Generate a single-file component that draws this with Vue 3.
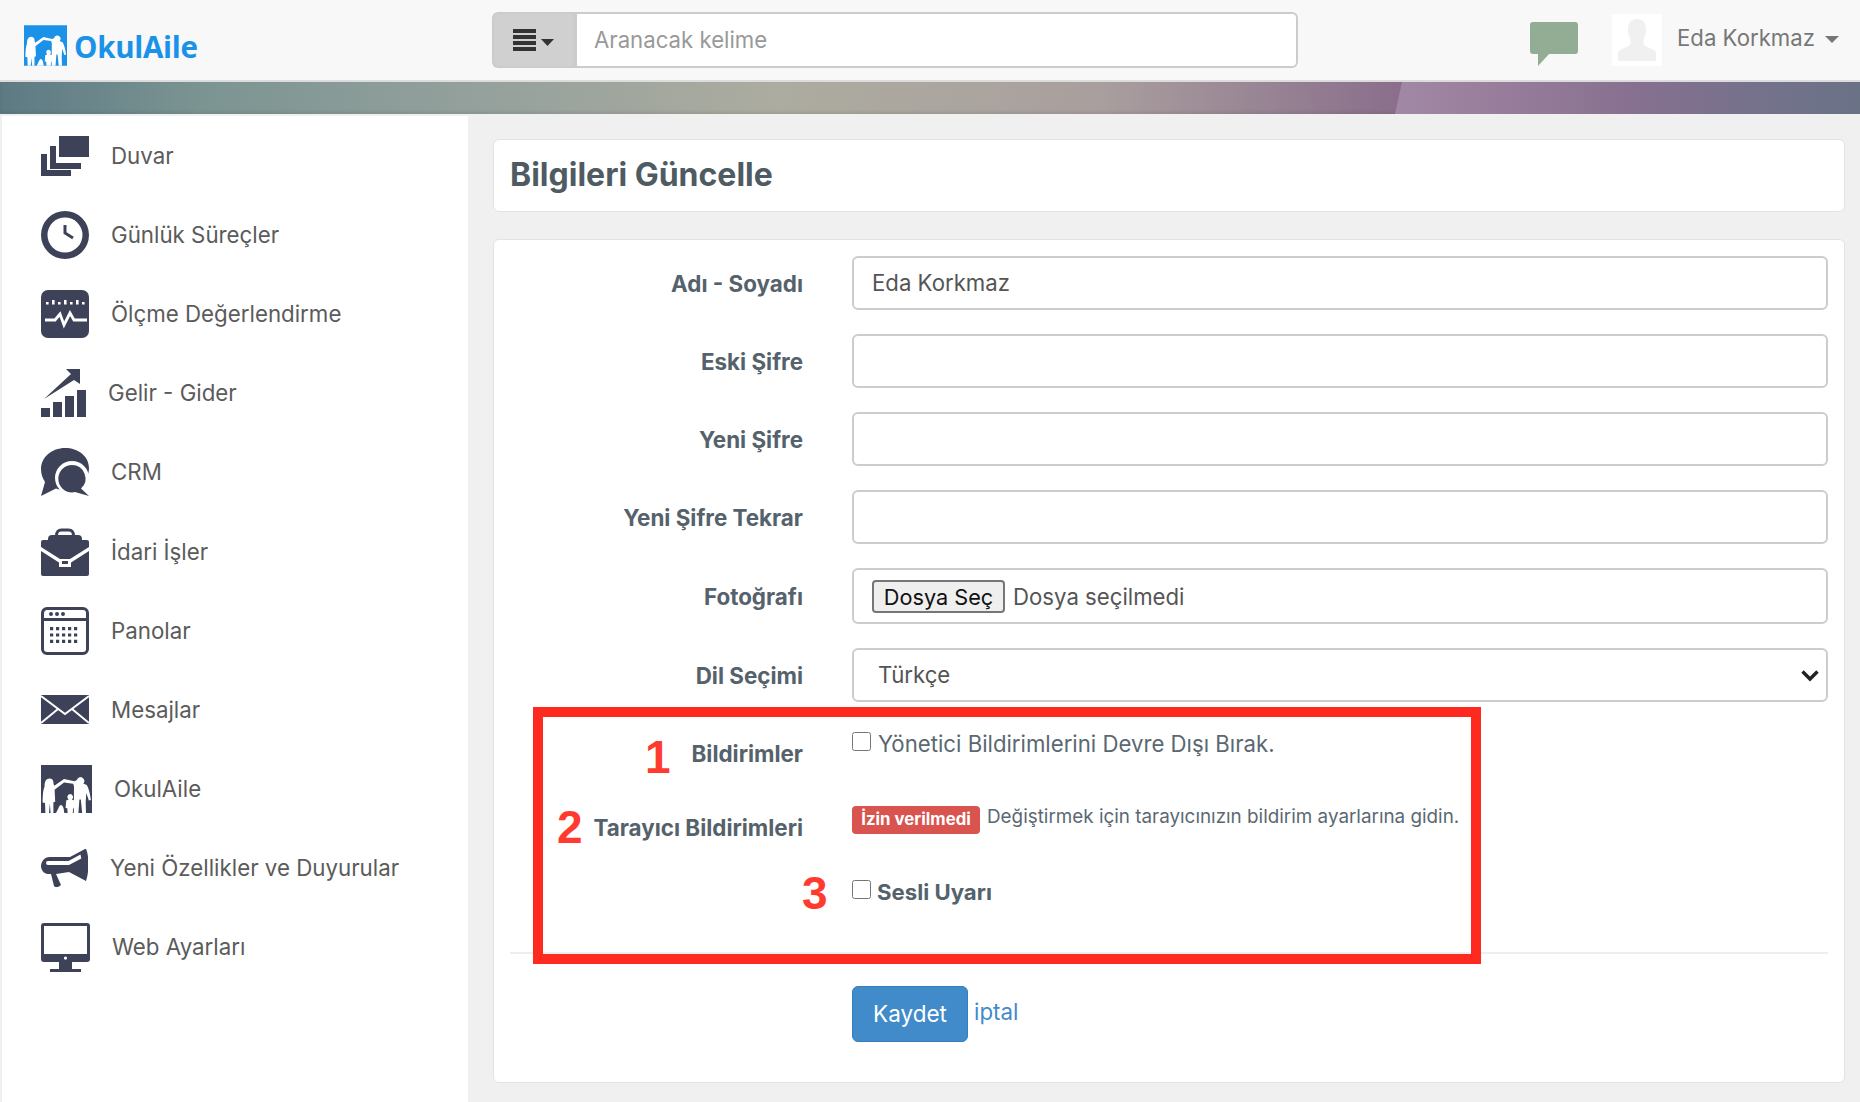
<script setup>
const dark = '#3d4259'
const family = 'M8.500 13.500a4 4.6 0 0 1 4 4.400c0 1 .2 2 .8 2.800L23 14l10.500 2.200 2.400-1.200a3.800 3.800 0 1 1 6.400 3.600l3.400 1.400c2 3 3.600 9.600 4.200 15l-2 .4-2.600-7.400-.6 9.400L45 48h-3.800l-1.400-13.400h-1.400L37.400 48h-4.600l.2-26.400-.8-2.800L23 17.600l-9.400 7.200.6 12-1.800.4L12.400 48H9.600l-.8-9.600L8 48H4.400l-.4-10-2.400-.6C1.800 31 2 25 3.600 21.600 3.400 17 5 13.500 8.500 13.500ZM29 29a3 3 0 0 1 1.800 5.400l2.400 1.200.6 7.400-1.700.2-.3 4.800h-5.200l-.3-4.800-1.700-.2.6-7.400 2.400-1.200A3 3 0 0 1 29 29ZM15 48l2.500-5c.8-1.800 1.500-3 2.500-3s1.700 1.200 2.500 3l.8 5Z'
const gridCells = []
for (let r = 0; r < 3; r++) for (let c = 0; c < 5; c++) gridCells.push(`M${9 + c * 6} ${20 + r * 6.4}h3.200v3.200h-3.200z`)
const dots = [5, 11, 17, 23, 29, 35, 41].map((x, i) => `M${x} ${i % 2 ? 10 : 12}h2.600v${i % 2 ? 4.600 : 2.600}h-2.600z`).join('')

const items = [
  { label: 'Duvar', w: 48, h: 40, paths: [{ d: 'M18 0h30v21H18zM9 10h6v17h25v6H9zM0 18h6v16h24v6H0z' }] },
  { label: 'Günlük Süreçler', w: 48, h: 48, paths: [{ d: 'M24 0a24 24 0 1 1 0 48 24 24 0 0 1 0-48Zm0 6.500a17.500 17.500 0 1 0 0 35 17.500 17.500 0 0 0 0-35Z' }, { d: 'M24 14v8l8 5', f: 'none', s: dark, w: 3 }] },
  { label: 'Ölçme Değerlendirme', w: 48, h: 48, paths: [{ d: 'M7 0h34a7 7 0 0 1 7 7v34a7 7 0 0 1-7 7H7a7 7 0 0 1-7-7V7a7 7 0 0 1 7-7Z' }, { d: dots, f: '#fff' }, { d: 'M4 30h10l5-6 4 11 6-12 4 7h13', f: 'none', s: '#fff', w: 2.800 }] },
  { label: 'Gelir - Gider', w: 45, h: 48, paths: [{ d: 'M0 39h9v9H0zM12 33h9v15h-9zM24 27h9v21h-9zM36 21h9v27h-9zM39 0H25l5 5L3 30l30-19 6 4Z' }] },
  { label: 'CRM', w: 48, h: 48, paths: [{ d: 'M24 0c13 0 24 8 24 20 0 12-11 22-24 22-3 0-6-.4-9-1.400L0 48l4-14C1.500 30 0 26 0 21 0 9 11 0 24 0Z' }, { d: 'M31 13a17 17 0 1 1 0 34 17 17 0 0 1 0-34Z', f: '#fff' }, { d: 'M31 17a13.500 13.500 0 0 1 9 23.500l8 7.500-14-4a13.700 13.700 0 0 1-3 .4 13.700 13.700 0 0 1 0-27.400Z' }] },
  { label: 'İdari İşler', w: 48, h: 48, paths: [{ d: 'M15.500 8c0-5 2-6 5-6h7c3 0 5 1 5 6', f: 'none', s: dark, w: 3 }, { d: 'M11 7h26a4 4 0 0 1 4 4v1H7v-1a4 4 0 0 1 4-4ZM2 12h44a2 2 0 0 1 2 2v5L29 31H19L0 19v-5a2 2 0 0 1 2-2ZM0 23l18 11.500V39h12v-4.500L48 23v23a2 2 0 0 1-2 2H2a2 2 0 0 1-2-2Z' }, { d: 'M21 33h6v3h-6z' }] },
  { label: 'Panolar', w: 48, h: 48, paths: [{ d: 'M6 1.500h36a4.500 4.500 0 0 1 4.500 4.500v36a4.500 4.500 0 0 1-4.500 4.500H6A4.500 4.500 0 0 1 1.500 42V6A4.500 4.500 0 0 1 6 1.500ZM1.500 12.500h45', f: 'none', s: dark, w: 3 }, { d: 'M10 5a2 2 0 1 1 0 4 2 2 0 0 1 0-4Zm6 0a2 2 0 1 1 0 4 2 2 0 0 1 0-4Zm6 0a2 2 0 1 1 0 4 2 2 0 0 1 0-4Z' }, { d: gridCells.join('') }] },
  { label: 'Mesajlar', w: 48, h: 29, paths: [{ d: 'M0 0h48v29H0z' }, { d: 'M0 1l24 18L48 1M0 28l17-14M48 28L31 14', f: 'none', s: '#fff', w: 2 }] },
  { label: 'OkulAile', w: 51, h: 48, paths: [{ d: 'M0 0h51v48H0z' }, { d: family, f: '#fff' }] },
  { label: 'Yeni Özellikler ve Duyurular', w: 47, h: 38, paths: [{ d: 'M9 8h20L44 0h1c3 6 3.500 22 0 32L28 23l-13 2 5 11c-3 3-6 2.500-7 1L10 25H7c-4 0-7-4-7-8s3-9 9-9Z' }, { d: 'M7 12h20.500l12-6.500.8 4L28 16H7a2 2 0 0 1 0-4Z', f: '#fff' }] },
  { label: 'Web Ayarları', w: 49, h: 49, paths: [{ d: 'M3 0h43a3 3 0 0 1 3 3v33a3 3 0 0 1-3 3H31v7h9v3H9v-3h9v-7H3a3 3 0 0 1-3-3V3a3 3 0 0 1 3-3Zm0 3v28h43V3Z', er: true }, { d: 'M24.500 33.500a1.600 1.600 0 1 1 0 3.200 1.600 1.600 0 0 1 0-3.200Z', f: '#fff' }] },
]

const inputs = [
  { label: 'Adı - Soyadı', value: 'Eda Korkmaz' },
  { label: 'Eski Şifre', value: '' },
  { label: 'Yeni Şifre', value: '' },
  { label: 'Yeni Şifre Tekrar', value: '' },
]
</script>

<template>
  <div class="page">
    <header class="nav">
      <div class="logo">
        <svg class="logo-mark" width="43" height="41" viewBox="0 0 51 48">
          <path d="M0 0h51v48H0z" fill="#1a92e8" />
          <path :d="family" fill="#fff" />
        </svg>
        <span class="logo-text">OkulAile</span>
      </div>
      <div class="search">
        <button class="search-btn" type="button" aria-label="Menü">
          <svg width="42" height="22" viewBox="0 0 42 22">
            <path d="M0 0h23v4H0zM0 6h23v4H0zM0 12h23v4H0zM0 18h23v4H0zM28 10h13l-6.500 7z" fill="#333" />
          </svg>
        </button>
        <input class="search-input" type="text" placeholder="Aranacak kelime" />
      </div>
      <svg class="chat" width="48" height="44" viewBox="0 0 48 44">
        <path d="M3 0h42a3 3 0 0 1 3 3v26a3 3 0 0 1-3 3H19L8 44V32H3a3 3 0 0 1-3-3V3a3 3 0 0 1 3-3Z" fill="#92ad93" />
      </svg>
      <div class="avatar">
        <svg width="50" height="52" viewBox="0 0 50 52">
          <path d="M25 5c6 0 9 4 9 10 0 3 0 6-2 9-1 3-1 6 1 8l9 4c2 1 2 3 2 5v6H6v-6c0-2 0-4 2-5l9-4c2-2 2-5 1-8-2-3-2-6-2-9 0-6 3-10 9-10Z" fill="#f0f0f0" />
        </svg>
      </div>
      <span class="user">Eda Korkmaz</span>
      <span class="user-caret"></span>
    </header>
    <div class="banner"></div>

    <div class="body">
      <aside class="side">
        <a v-for="it in items" :key="it.label" class="side-row">
          <svg class="side-icon" :width="it.w" :height="it.h" :viewBox="`0 0 ${it.w} ${it.h}`">
            <path
              v-for="(p, i) in it.paths"
              :key="i"
              :d="p.d"
              :fill="p.f || '#3d4259'"
              :fill-rule="p.er ? 'evenodd' : 'nonzero'"
              :stroke="p.s"
              :stroke-width="p.w"
            />
          </svg>
          <span class="side-label">{{ it.label }}</span>
        </a>
      </aside>

      <main class="main">
        <section class="panel head-panel">
          <h1 class="title">Bilgileri Güncelle</h1>
        </section>

        <section class="panel form-panel">
          <div v-for="f in inputs" :key="f.label" class="row">
            <label class="label">{{ f.label }}</label>
            <input class="control" type="text" :value="f.value" />
          </div>

          <div class="row">
            <label class="label">Fotoğrafı</label>
            <div class="control file">
              <button class="file-btn" type="button">Dosya Seç</button>
              <span class="file-name">Dosya seçilmedi</span>
            </div>
          </div>

          <div class="row row-lang">
            <label class="label">Dil Seçimi</label>
            <div class="select-wrap">
              <select class="control select">
                <option>Türkçe</option>
              </select>
              <svg class="chev" width="20" height="13" viewBox="0 0 20 13">
                <path d="M2.500 2.500L10 10l7.500-7.500" fill="none" stroke="#222" stroke-width="3.400" />
              </svg>
            </div>
          </div>

          <div class="row top row-a">
            <label class="label">Bildirimler</label>
            <label class="check">
              <input type="checkbox" />
              <span>Yönetici Bildirimlerini Devre Dışı Bırak.</span>
            </label>
          </div>

          <div class="row top row-b">
            <label class="label">Tarayıcı Bildirimleri</label>
            <div class="notice">
              <span class="badge">İzin verilmedi</span>
              <span class="hint">Değiştirmek için tarayıcınızın bildirim ayarlarına gidin.</span>
            </div>
          </div>

          <div class="row top row-c">
            <span></span>
            <label class="check strong">
              <input type="checkbox" />
              <span>Sesli Uyarı</span>
            </label>
          </div>

          <div class="actions">
            <button class="save" type="button">Kaydet</button>
            <a class="cancel">iptal</a>
          </div>

          <div class="redbox">
            <span class="num n1">1</span>
            <span class="num n2">2</span>
            <span class="num n3">3</span>
          </div>
        </section>
      </main>
    </div>
  </div>
</template>

<style>
html, body { margin: 0; background: #f0f0f0; overflow: hidden; }
</style>

<style scoped>
.page { width: 1860px; height: 1102px; overflow: hidden; font-family: Inter, "Liberation Sans", sans-serif; background: #f0f0f0; }
.nav { height: 80px; border-bottom: 2px solid #dcdcdc; background: #f8f8f8; display: flex; align-items: flex-start; }
.logo { width: 468px; padding: 25px 0 0 24px; box-sizing: border-box; display: flex; align-items: flex-end; flex: none; }
.logo-mark { display: block; }
.logo-text { font: 700 29.500px/32px "Open Sans", sans-serif; color: #1a92e8; margin: 0 0 3px 7px; letter-spacing: -.3px; }
.search { width: 806px; margin: 12px 0 0 24px; height: 56px; display: flex; flex: none; }
.search-btn { width: 81px; padding: 0 0 0 19px; text-align: left; background: #d0d0d0; border: 2px solid #ccc; border-right: 0; border-radius: 6px 0 0 6px; flex: none; }
.search-btn svg { display: block; }
.search-input { flex: 1; min-width: 0; box-sizing: border-box; border: 2px solid #ccc; border-left: 4px solid #ccc; border-radius: 0 6px 6px 0; padding: 0 0 2px 17px; font: 22.200px Inter, sans-serif; background: #fff; outline: 0; color: #555; }
.search-input::placeholder { color: #999; opacity: 1; }
.chat { margin: 22px 0 0 232px; flex: none; }
.avatar { margin: 14px 0 0 34px; width: 50px; height: 52px; background: #fff; flex: none; }
.avatar svg { display: block; }
.user { margin: 22px 0 0 15px; font-size: 22.200px; line-height: 32px; color: #777; flex: none; }
.user-caret { margin: 36px 0 0 10px; border: 7px solid transparent; border-top-color: #777; border-bottom: 0; flex: none; }

.banner { position: relative; height: 32px; background: linear-gradient(90deg, #5d7a84 0, #7b9492 200px, #93a09c 460px, #adaca0 780px, #a99f9e 1100px, #8a6e8c 1400px); box-shadow: inset 0 -2px 3px rgba(60, 60, 60, .12); overflow: hidden; }
.banner::after { content: ""; position: absolute; inset: 0; background: linear-gradient(90deg, #a087a3 1405px, #9a7f9d 1480px, #86708f 1640px, #72728a 1780px, #6a7286 1860px); clip-path: polygon(1402px 0, 100% 0, 100% 100%, 1395px 100%); }

.body { display: flex; height: 988px; margin-top: 2px; }
.side { width: 466px; margin-left: 2px; height: 100%; background: #fff; padding-left: 39px; box-sizing: border-box; flex: none; }
.side-row { height: 79.2px; display: flex; align-items: center; gap: 22px; }
.side-icon { display: block; flex: none; }
.side-label { font-size: 22.300px; line-height: 30px; color: #5b5b5b; white-space: nowrap; }

.main { flex: 1; padding: 23px 15px 0 25px; min-width: 0; }
.panel { background: #fff; border: 1px solid #e3e3e3; border-radius: 6px; box-sizing: border-box; }
.head-panel { height: 73px; display: flex; align-items: center; padding-left: 16px; margin-bottom: 27px; }
.title { margin: 0 0 2px; font-size: 32px; line-height: 40px; font-weight: 700; color: #4f5b62; }
.form-panel { position: relative; height: 844px; padding: 16px 16px 0; }

.row { display: grid; grid-template-columns: 293px 976px; column-gap: 49px; align-items: center; margin-bottom: 24px; }
.row.top { align-items: start; margin-bottom: 0; }
.row.row-lang { margin-bottom: 0; }
.label { font-size: 22.400px; line-height: 30px; font-weight: 700; color: #55626c; text-align: right; white-space: nowrap; padding-top: 1px; }
.control { width: 976px; height: 54px; box-sizing: border-box; border: 2px solid #ccc; border-radius: 6px; padding: 0 18px 2px; font: 22.200px Inter, sans-serif; color: #555; background: #fff; outline: 0; }
.file { height: 56px; display: flex; align-items: center; padding-left: 18px; padding-bottom: 0; }
.file-btn { width: 133px; height: 33px; padding: 2px 0 0; box-sizing: border-box; border: 2px solid #767676; border-radius: 4px; background: #efefef; font: 21.700px Inter, sans-serif; color: #111; }
.file-name { margin-left: 8px; }
.select-wrap { position: relative; width: 976px; }
.select { display: block; appearance: none; padding-left: 24px; }
.chev { position: absolute; right: 8px; top: 21px; pointer-events: none; }

.row-a { height: 80px; }
.row-a .label { padding-top: 37px; }
.row-a .check { padding-top: 30px; }
.row-a .check span { position: relative; top: 1px; }
.row-b { height: 78px; }
.row-b .label { padding-top: 31px; }
.row-c { height: 92px; }
.row-c .check { padding-top: 20px; }
.check { display: flex; align-items: flex-start; font-size: 22.200px; line-height: 22px; color: #5a6872; white-space: nowrap; }
.check input { width: 19px; height: 19px; margin: 0 7px 0 0; flex: none; }
.check.strong { font-weight: 700; color: #55626c; }
.check.strong input { margin-right: 6px; }
.check.strong span { padding-top: 1px; }
.notice { padding-top: 24px; display: flex; align-items: flex-start; white-space: nowrap; }
.badge { width: 128px; height: 28px; box-sizing: border-box; background: #d9534f; color: #fff; border-radius: 4px; font-size: 16.800px; line-height: 26px; font-weight: 700; text-align: center; flex: none; }
.hint { margin-left: 7px; font-size: 18.850px; line-height: 22px; color: #5a6872; }

.actions { border-top: 2px solid #eee; padding: 32px 0 0 342px; display: flex; align-items: flex-start; gap: 6px; }
.save { width: 116px; height: 56px; background: #428bca; border: 1px solid #357ebd; border-radius: 6px; color: #fff; font: 22.500px Inter, sans-serif; padding: 0 0 2px; }
.cancel { font-size: 22.300px; line-height: 30px; color: #428bca; margin-top: 11px; }

.redbox { position: absolute; left: 39px; top: 467px; width: 948px; height: 257px; box-sizing: border-box; border: 10px solid #ff2a1f; pointer-events: none; }
.num { position: absolute; font: 700 46px/46px "Liberation Sans", sans-serif; color: #ff3b30; }
.n1 { left: 102px; top: 17px; }
.n2 { left: 14px; top: 87px; }
.n3 { left: 259px; top: 153px; }
</style>
